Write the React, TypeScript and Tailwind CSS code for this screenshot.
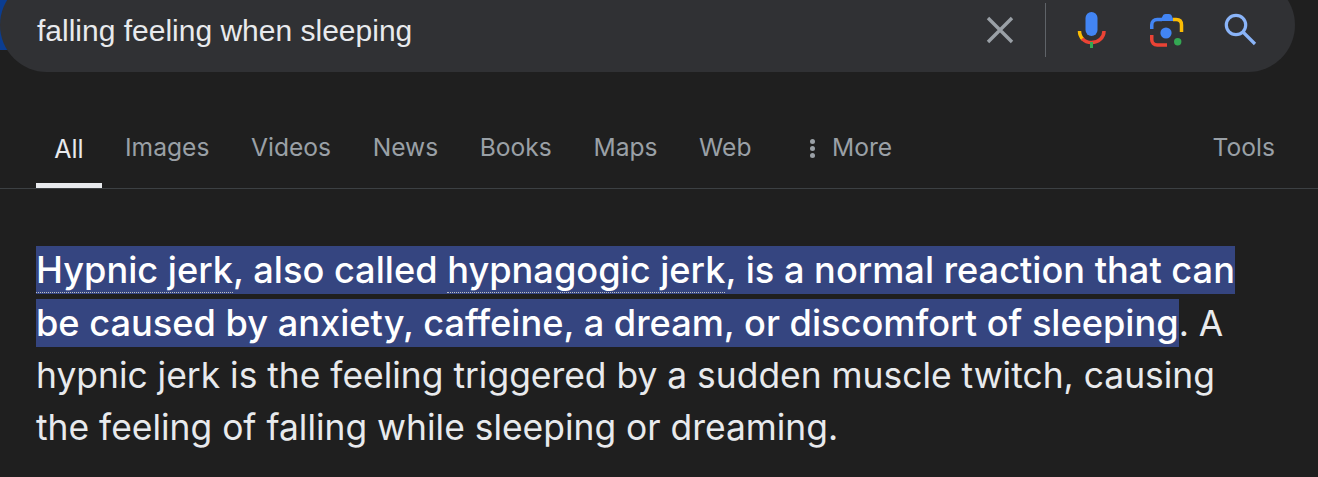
const tabs = ['Images', 'Videos', 'News', 'Books', 'Maps', 'Web'];

const MicIcon = () => (
  <svg width="30" height="36" viewBox="0 0 30 36" fill="none">
    <rect x="9.5" y="0" width="12" height="24" rx="6" fill="#4285f4" />
    <path d="M3.5 19c0 3.4 1.4 6.4 3.7 8.6" stroke="#fbbc04" strokeWidth="3.5" />
    <path d="M6.2 26.6c2.3 2.5 5.6 4 9.3 4 6.9 0 12.5-5 12.5-11.6" stroke="#ea4335" strokeWidth="3.5" />
    <rect x="14" y="30" width="3" height="6" fill="#34a853" />
  </svg>
);

const LensIcon = () => (
  <svg width="38" height="38" viewBox="0 0 38 38" fill="none" className="mt-[2px]">
    <path d="M3.75 17v-4c0-3.3 2.2-5.5 5.5-5.5H14" stroke="#4285f4" strokeWidth="3.5" />
    <path d="M12 9l2.8-5.2c.5-1 1.3-1.8 2.7-1.8h3.5c1.4 0 2.2.8 2.7 1.8L26 9z" fill="#4285f4" />
    <path d="M25 7.5h3.2c3.7 0 5.3 2.5 5.3 5.5v7" stroke="#fbbc04" strokeWidth="3.5" />
    <path d="M3.75 23v4.5c0 3.3 2.2 5.5 5.5 5.5H19" stroke="#ea4335" strokeWidth="3.5" />
    <circle cx="18" cy="21" r="5.6" fill="#4285f4" />
    <circle cx="29.7" cy="29.7" r="3.7" fill="#34a853" />
  </svg>
);

const SearchIcon = () => (
  <svg width="34" height="34" viewBox="0 0 34 34" fill="none" stroke="#8ab4f8" strokeWidth="3.2">
    <circle cx="12" cy="12" r="9.7" />
    <path d="M19 19l12 12" />
  </svg>
);

const App = () => {
  return (
    <div className="w-[1318px] h-[477px] overflow-hidden bg-[#1f1f1f] relative font-['Inter',sans-serif]">
      <div className="absolute left-0 top-0 w-[14px] h-[50px] bg-[#0b3d91]" />

      <div className="relative -mt-[22px] w-[1295px] h-[94px] rounded-full bg-[#303134] flex items-center pt-[10px]">
        <div className="flex-1 pl-[37px] text-[30px] text-[#e8eaed] font-['Liberation_Sans',sans-serif]">
          falling feeling when sleeping
        </div>
        <div className="flex items-center pr-[37px]">
          <svg width="28" height="28" viewBox="0 0 28 28" fill="none" stroke="#9aa0a6" strokeWidth="3.4">
            <path d="M2 2l24 24M26 2L2 26" />
          </svg>
          <div className="w-px h-[54px] bg-[#5f6368] ml-[31px] mr-[30px]" />
          <MicIcon />
          <div className="w-[42px]" />
          <LensIcon />
          <div className="w-[38px]" />
          <SearchIcon />
        </div>
      </div>

      <div className="h-[117px] border-b border-[#3c4043] flex items-stretch pl-[36px] pr-[43px] text-[24.6px] text-[#9aa0a6]">
        <div className="relative w-[66px] flex justify-center pt-[59px] text-[25px] text-[#e8eaed] leading-[36px]">
          All
          <div className="absolute left-0 right-0 bottom-0 h-[5px] bg-[#e8eaed]" />
        </div>
        <div className="flex gap-[41.6px] ml-[23px] pt-[57px] leading-[36px]">
          {tabs.map((tab) => (
            <span key={tab}>{tab}</span>
          ))}
        </div>
        <div className="flex items-start ml-[58.5px] pt-[57px] leading-[36px]">
          <div className="flex flex-col gap-[2px] mt-[10px] mr-[17px]">
            <span className="w-[5px] h-[5px] rounded-full bg-[#9aa0a6]" />
            <span className="w-[5px] h-[5px] rounded-full bg-[#9aa0a6]" />
            <span className="w-[5px] h-[5px] rounded-full bg-[#9aa0a6]" />
          </div>
          More
        </div>
        <div className="ml-auto pt-[57px] leading-[36px]">Tools</div>
      </div>

      <div className="pl-[36px] pt-[55px] text-[35.4px] leading-[52px] text-[#e8eaed] w-[1240px]">
        <span className="bg-[#354580] text-white text-[36.2px] font-medium py-[2px]">
          <span className="border-b border-dotted border-[#bdc1c6]">Hypnic jerk</span>, also called{' '}
          <span className="border-b border-dotted border-[#bdc1c6]">hypnagogic jerk</span>, is a normal reaction that can be caused by anxiety, caffeine, a dream, or discomfort of sleeping
        </span>
        . A hypnic jerk is the feeling triggered by a sudden muscle twitch, causing the feeling of falling while sleeping or dreaming.
      </div>
    </div>
  );
};

export default App;
